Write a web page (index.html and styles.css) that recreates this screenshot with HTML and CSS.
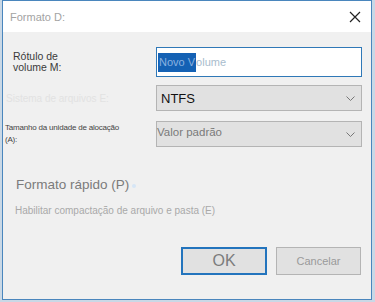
FILE: index.html
```html
<!DOCTYPE html>
<html lang="pt">
<head>
  <meta charset="UTF-8">
  <title>Formato D:</title>
  <link rel="stylesheet" href="styles.css">
</head>
<body>
  <div class="window">
    <div class="titlebar">
      <span class="title">Formato D:</span>
      <svg class="close" width="12" height="12" viewBox="0 0 12 12"><path d="M1 1 L11 11 M11 1 L1 11" stroke="#222" stroke-width="1.2" fill="none"/></svg>
    </div>
    <div class="content">
      <div class="row row-name">
        <div class="label label-name">Rótulo de<br>volume M:</div>
        <div class="input"><span class="sel">Novo V</span><span class="rest">olume</span></div>
      </div>
      <div class="row row-fs">
        <div class="label label-fs">Sistema de arquivos E:</div>
        <div class="select"><span class="val-fs">NTFS</span><svg class="chev" width="9" height="5" viewBox="0 0 9 5"><path d="M0.5 0.5 L4.5 4.5 L8.5 0.5" stroke="#777" fill="none"/></svg></div>
      </div>
      <div class="row row-size">
        <div class="label label-size">Tamanho da unidade de alocação<br>(A):</div>
        <div class="select"><span class="val-size">Valor padrão</span><svg class="chev" width="9" height="5" viewBox="0 0 9 5"><path d="M0.5 0.5 L4.5 4.5 L8.5 0.5" stroke="#777" fill="none"/></svg></div>
      </div>
      <div class="quick">Formato rápido (P)<span class="dot"></span></div>
      <div class="compress">Habilitar compactação de arquivo e pasta (E)</div>
      <div class="buttons">
        <button class="btn btn-ok">OK</button>
        <button class="btn btn-cancel">Cancelar</button>
      </div>
    </div>
  </div>
</body>
</html>
```

FILE: styles.css
```css
* { margin: 0; padding: 0; box-sizing: border-box; }
body {
  font-family: "Liberation Sans", Arial, sans-serif;
  background: #c9d8e6;
  width: 375px;
  height: 302px;
  overflow: hidden;
}
.window {
  margin-left: 2px;
  width: 370px;
  height: 300px;
  border: 1px solid #4a86bd;
  background: #f0f0f0;
  display: flex;
  flex-direction: column;
}
.titlebar {
  height: 31px;
  background: #fff;
  display: flex;
  align-items: center;
  justify-content: space-between;
  padding: 0 10px 0 7px;
}
.title {
  font-size: 11px;
  color: #a3a3a3;
}
.content {
  flex: 1;
  padding: 15px 9px 0 0;
  display: flex;
  flex-direction: column;
}
.row {
  display: flex;
  align-items: center;
  justify-content: space-between;
}
.label { color: #3a3a3a; }
.label-name {
  font-size: 10.5px;
  line-height: 11px;
  padding-left: 10px;
}
.label-fs {
  font-size: 10px;
  color: #e2e2e2;
  padding-left: 3px;
}
.label-size {
  font-size: 8px;
  line-height: 12px;
  padding-left: 2px;
  color: #444;
  letter-spacing: -0.2px;
}
.input {
  width: 206px;
  height: 30px;
  background: #fff;
  border: 1px solid #2f78b7;
  display: flex;
  align-items: center;
  padding-left: 1px;
  font-size: 11px;
}
.sel {
  background: #1461b4;
  color: #8bb2e0;
  padding: 3px 1px 4px 1px;
}
.rest { color: #a8bccd; }
.row-fs { margin-top: 8px; }
.row-size { margin-top: 10px; }
.select {
  width: 206px;
  height: 26px;
  background: #e1e1e1;
  border: 1px solid #b4b4b4;
  display: flex;
  align-items: center;
  justify-content: space-between;
  padding: 0 6px 0 4px;
}
.val-fs {
  font-size: 13px;
  color: #111;
}
.val-size {
  font-size: 11.5px;
  color: #7a7a7a;
  margin-left: -4px;
  margin-top: -4px;
}
.quick {
  margin-top: 30px;
  padding-left: 13px;
  font-size: 13.5px;
  color: #7b7b7b;
  display: flex;
  align-items: center;
}
.dot {
  width: 4px;
  height: 4px;
  margin-left: 3px;
  margin-top: 2px;
  border-radius: 50%;
  background: #d6e6f6;
}
.compress {
  margin-top: 13px;
  padding-left: 12px;
  font-size: 10px;
  color: #a9a9a9;
}
.buttons {
  margin-top: 31px;
  display: flex;
  justify-content: flex-end;
  gap: 9px;
  padding-right: 1px;
}
.btn {
  height: 28px;
  background: #e1e1e1;
  font-family: "Liberation Sans", Arial, sans-serif;
}
.btn-ok {
  width: 86px;
  border: 2px solid #2374bd;
  font-size: 16px;
  color: #7c7c7c;
}
.btn-cancel {
  width: 85px;
  border: 1px solid #b4b4b4;
  font-size: 11px;
  color: #9a9a9a;
}
```
